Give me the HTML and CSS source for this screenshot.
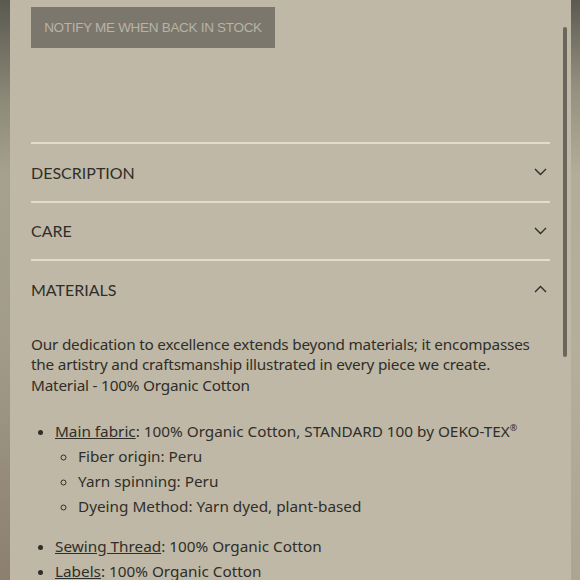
FILE: index.html
```html
<!DOCTYPE html>
<html lang="en">
  <head>
    <meta charset="UTF-8" />
    <meta name="viewport" content="width=device-width, initial-scale=1.0" />
    <title>Materials</title>
    <link rel="stylesheet" href="styles.css">
  </head>
  <body>
    <div class="edge edge-left"></div>
    <main class="page">
      <button class="notify-btn">NOTIFY ME WHEN BACK IN STOCK</button>

      <div class="accordion">
        <div class="accordion-item">
          <div class="accordion-header">
            <span class="accordion-title">DESCRIPTION</span>
            <svg class="chevron" width="13" height="8" viewBox="0 0 13 8"><path d="M1 1l5.5 5.5L12 1" /></svg>
          </div>
        </div>
        <div class="accordion-item">
          <div class="accordion-header">
            <span class="accordion-title">CARE</span>
            <svg class="chevron" width="13" height="8" viewBox="0 0 13 8"><path d="M1 1l5.5 5.5L12 1" /></svg>
          </div>
        </div>
        <div class="accordion-item open">
          <div class="accordion-header">
            <span class="accordion-title">MATERIALS</span>
            <svg class="chevron" width="13" height="8" viewBox="0 0 13 8"><path d="M1 7l5.5-5.5L12 7" /></svg>
          </div>
          <div class="accordion-body">
            <p class="intro">Our dedication to excellence extends beyond materials; it encompasses the artistry and craftsmanship illustrated in every piece we create.<br>Material - 100% Organic Cotton</p>
            <ul class="materials-list">
              <li>
                <u>Main fabric</u>: 100% Organic Cotton, STANDARD 100 by OEKO-TEX<sup>®</sup>
                <ul class="sub-list">
                  <li>Fiber origin: Peru</li>
                  <li>Yarn spinning: Peru</li>
                  <li>Dyeing Method: Yarn dyed, plant-based</li>
                </ul>
              </li>
              <li><u>Sewing Thread</u>: 100% Organic Cotton</li>
              <li><u>Labels</u>: 100% Organic Cotton</li>
            </ul>
          </div>
        </div>
      </div>
      <div class="scrollbar"></div>
    </main>
    <div class="edge edge-right"></div>
  </body>
</html>
```

FILE: styles.css
```css
* {
  margin: 0;
  padding: 0;
  box-sizing: border-box;
}
body {
  display: flex;
  width: 580px;
  height: 580px;
  overflow: hidden;
  background: #bfb8a6;
  color: #2f2e29;
  font-family: "Noto Sans", sans-serif;
}
.edge {
  flex: none;
  height: 100%;
}
.edge-left {
  width: 10px;
  background: linear-gradient(180deg, #5a5950 0%, #8e8b7a 18%, #a6a08f 30%, #a29b89 60%, #8c7f6d 100%);
}
.edge-right {
  width: 9px;
  background: linear-gradient(180deg, #5c5a51 0%, #948f7f 15%, #b3ac99 30%, #b5ae9b 60%, #ada592 100%);
}
.page {
  flex: 1;
  position: relative;
  padding: 7px 21px 0 21px;
}
.notify-btn {
  display: block;
  width: 244px;
  height: 41px;
  background: #7b776d;
  border: none;
  color: #b8b3a5;
  font-family: "Liberation Sans", Arial, sans-serif;
  font-size: 13.5px;
  letter-spacing: -0.3px;
}
.accordion {
  margin-top: 94px;
  width: 519px;
}
.accordion-item {
  border-top: 2px solid #e2dccf;
}
.accordion-header {
  height: 56.5px;
  display: flex;
  align-items: center;
  justify-content: space-between;
  padding-right: 3px;
}
.accordion-title {
  font-family: Lato, sans-serif;
  font-size: 16px;
}
.chevron {
  fill: none;
  stroke: #2f2e29;
  stroke-width: 1.4;
}
.accordion-body {
  padding-top: 16px;
  font-size: 15.3px;
}
.intro {
  line-height: 20.5px;
  letter-spacing: -0.2px;
}
.materials-list {
  margin-top: 24px;
  padding-left: 24px;
  line-height: 25px;
}
.materials-list sup {
  font-size: 9px;
  line-height: 0;
}
.sub-list {
  list-style: circle;
  padding-left: 23px;
  margin-bottom: 15px;
}
.scrollbar {
  position: absolute;
  top: 27px;
  right: 4px;
  width: 4px;
  height: 330px;
  border-radius: 2px;
  background: #6a665c;
}
```
